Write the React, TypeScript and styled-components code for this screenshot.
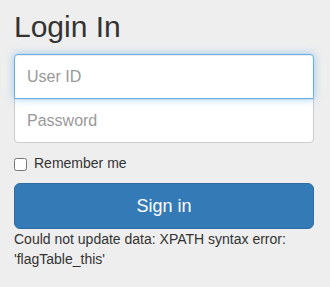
import React from "react";
import styled, { createGlobalStyle, css } from "styled-components";

const GlobalStyle = createGlobalStyle`
  * {
    box-sizing: border-box;
  }
  body {
    margin: 0;
    background-color: #eee;
    font-family: "Liberation Sans", Arial, Helvetica, sans-serif;
    font-size: 14px;
    line-height: 20px;
    color: #333;
  }
`;

function App() {
  return (
    <>
      <GlobalStyle />
      <SigninForm onSubmit={(e) => e.preventDefault()}>
        <Heading>Login In</Heading>
        <TextInput type="text" placeholder="User ID" $focused $position="top" />
        <TextInput type="password" placeholder="Password" $position="bottom" />
        <CheckRow>
          <CheckBox type="checkbox" />
          Remember me
        </CheckRow>
        <SubmitButton type="submit">Sign in</SubmitButton>
        <ErrorText>Could not update data: XPATH syntax error: 'flagTable_this'</ErrorText>
      </SigninForm>
    </>
  );
}

// bootstrap-ish signin box
const SigninForm = styled.form`
  width: 330px;
  padding: 10px 16px 0 14px;
  display: flex;
  flex-direction: column;
`;

const Heading = styled.h2`
  font-size: 30px;
  font-weight: 500;
  line-height: 33px;
  margin: 0 0 11px;
  color: #333;
`;

const TextInput = styled.input<{ $focused?: boolean; $position: "top" | "bottom" }>`
  display: block;
  width: 100%;
  height: 45px;
  padding: 10px 12px;
  font-family: inherit;
  font-size: 16px;
  line-height: 23px;
  color: #555;
  background: #fff;
  border: 1px solid #ccc;
  border-radius: 4px;
  box-shadow: inset 0 1px 1px rgba(0, 0, 0, 0.075);
  outline: none;
  position: relative;

  &::placeholder {
    color: #999;
  }

  ${(p) =>
    p.$position === "top"
      ? css`
          margin-bottom: -1px;
          border-bottom-left-radius: 0;
          border-bottom-right-radius: 0;
        `
      : css`
          border-top-left-radius: 0;
          border-top-right-radius: 0;
        `}

  ${(p) =>
    p.$focused &&
    css`
      z-index: 2;
      border-color: #66afe9;
      box-shadow: inset 0 1px 1px rgba(0, 0, 0, 0.075), 0 0 8px rgba(102, 175, 233, 0.6);
    `}
`;

const CheckRow = styled.label`
  display: flex;
  align-items: flex-start;
  margin: 10px 0;
  min-height: 20px;
  cursor: pointer;
`;

const CheckBox = styled.input`
  width: 13px;
  height: 13px;
  margin: 5px 7px 0 0;
`;

const SubmitButton = styled.button`
  display: block;
  width: 100%;
  height: 46px;
  padding: 10px 16px;
  font-family: inherit;
  font-size: 18px;
  line-height: 24px;
  color: #fff;
  background-color: #337ab7;
  border: 1px solid #2e6da4;
  border-radius: 6px;
  cursor: pointer;
`;

const ErrorText = styled.div`
  font-size: 14px;
  line-height: 20px;
`;

export default App;
